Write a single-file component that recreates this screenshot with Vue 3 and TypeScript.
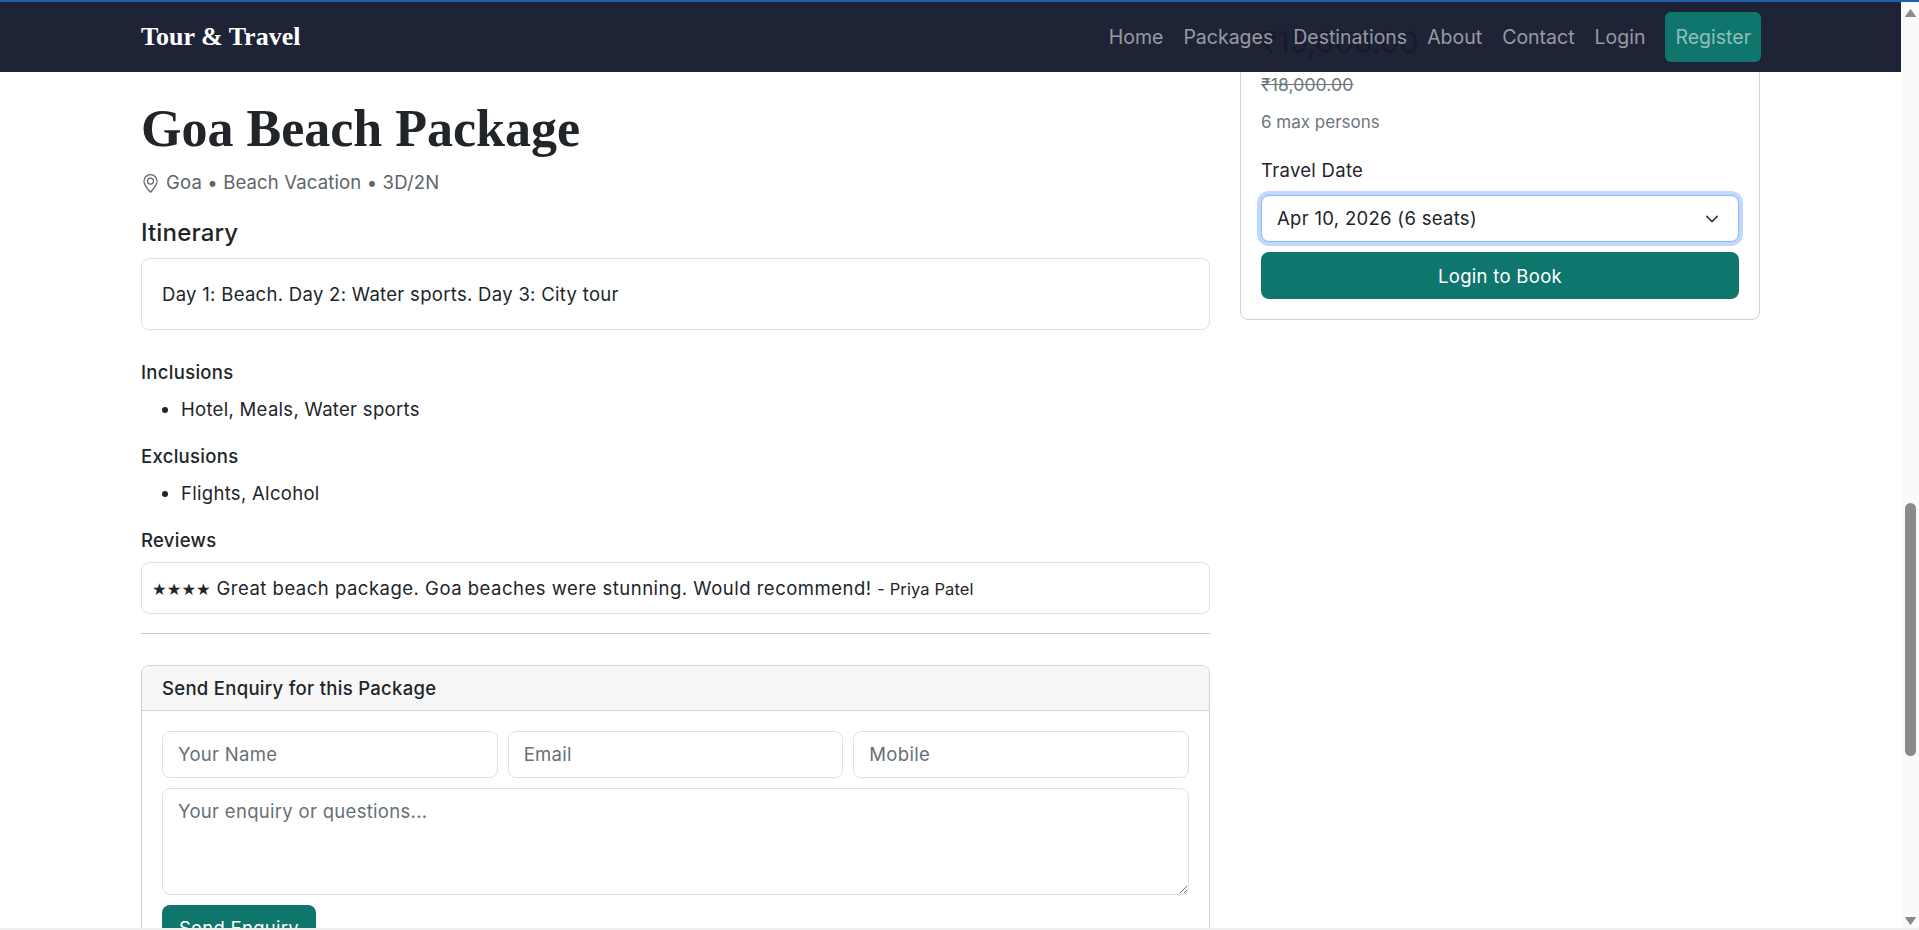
<script setup lang="ts">
const links: string[] = ['Home', 'Packages', 'Destinations', 'About', 'Contact', 'Login']
</script>

<template>
  <div class="window">
    <div class="topline"></div>
    <div class="viewport">
      <div class="page">
        <nav class="navbar">
          <a class="brand">Tour &amp; Travel</a>
          <div class="navlinks">
            <a v-for="l in links" :key="l" class="navlink">{{ l }}</a>
            <a class="navcta">Register</a>
          </div>
        </nav>
        <main class="row">
          <section class="left">
            <h1 class="title">Goa Beach Package</h1>
            <p class="location">
              <svg class="pin" viewBox="0 0 16 16" fill="currentColor" aria-hidden="true">
                <path d="M12.166 8.94c-.524 1.062-1.234 2.12-1.96 3.07A32 32 0 0 1 8 14.58a32 32 0 0 1-2.206-2.57c-.726-.95-1.436-2.008-1.96-3.07C3.304 7.867 3 6.862 3 6a5 5 0 0 1 10 0c0 .862-.305 1.867-.834 2.94M8 16s6-5.686 6-10A6 6 0 0 0 2 6c0 4.314 6 10 6 10" />
                <path d="M8 8a2 2 0 1 1 0-4 2 2 0 0 1 0 4m0 1a3 3 0 1 0 0-6 3 3 0 0 0 0 6" />
              </svg>
              <span>Goa • Beach Vacation • 3D/2N</span>
            </p>
            <h2 class="h-itin">Itinerary</h2>
            <div class="box itin">Day 1: Beach. Day 2: Water sports. Day 3: City tour</div>
            <h3 class="h-sub first">Inclusions</h3>
            <ul class="list"><li>Hotel, Meals, Water sports</li></ul>
            <h3 class="h-sub">Exclusions</h3>
            <ul class="list"><li>Flights, Alcohol</li></ul>
            <h3 class="h-sub">Reviews</h3>
            <div class="box review">
              <div><span class="stars">★★★★</span> Great beach package. Goa beaches were stunning. Would recommend! <small class="author">- Priya Patel</small></div>
            </div>
            <hr class="rule" />
            <div class="enquiry">
              <div class="enquiry-head">Send Enquiry for this Package</div>
              <form class="enquiry-body" @submit.prevent>
                <div class="fields">
                  <input class="control" placeholder="Your Name" />
                  <input class="control" placeholder="Email" />
                  <input class="control" placeholder="Mobile" />
                </div>
                <textarea class="control area" placeholder="Your enquiry or questions..."></textarea>
                <button class="btn send" type="button">Send Enquiry</button>
              </form>
            </div>
          </section>
          <aside class="right">
            <div class="price-card">
              <div class="price">₹15,000.00</div>
              <div class="old-price">₹18,000.00</div>
              <div class="persons">6 max persons</div>
              <label class="date-label">Travel Date</label>
              <div class="select-wrap">
                <select class="select">
                  <option>Apr 10, 2026 (6 seats)</option>
                </select>
                <svg class="chevron" viewBox="0 0 16 16" fill="none" stroke="#343a40" stroke-width="1.8" stroke-linecap="round" stroke-linejoin="round" aria-hidden="true">
                  <path d="m2 5 6 6 6-6" />
                </svg>
              </div>
              <button class="btn book" type="button">Login to Book</button>
            </div>
          </aside>
        </main>
      </div>
      <div class="scrollbar">
        <svg class="arrow" viewBox="0 0 12 10"><path d="M6 1.5 11 8.5H1z" fill="#8a8a8a" stroke="#8a8a8a" stroke-linejoin="round" /></svg>
        <div class="track"><div class="thumb"></div></div>
        <svg class="arrow" viewBox="0 0 12 10"><path d="M1 1.5H11L6 8.5z" fill="#8a8a8a" stroke="#8a8a8a" stroke-linejoin="round" /></svg>
      </div>
    </div>
    <div class="bottomline"></div>
  </div>
</template>

<style>
html, body { margin: 0; padding: 0; overflow: hidden; background: #fff; }
</style>

<style scoped>
.window {
  width: 1919px;
  height: 930px;
  display: flex;
  flex-direction: column;
  overflow: hidden;
  font-family: Inter, "Noto Sans", sans-serif;
  font-size: 18.5px;
  line-height: 1.4;
  color: #212529;
  letter-spacing: 0.3px;
}
.topline { height: 2px; background: #1f5fae; flex: none; }
.bottomline { height: 2px; background: #eeeeee; flex: none; }
.viewport { flex: 1; min-height: 0; display: flex; }
.page { position: relative; flex: 1; min-width: 0; overflow: hidden; background: #fff; }

.navbar {
  position: absolute;
  top: 0;
  left: 0;
  right: 0;
  height: 70px;
  z-index: 5;
  box-sizing: border-box;
  padding: 1px 140px 0 141px;
  display: flex;
  align-items: center;
  justify-content: space-between;
  background: rgba(23, 29, 48, 0.97);
}
.brand {
  font-family: "Liberation Serif", serif;
  font-weight: 700;
  font-size: 26px;
  letter-spacing: 0;
  color: #fff;
}
.navlinks { display: flex; align-items: center; gap: 20px; font-size: 19.5px; letter-spacing: 0; margin-top: -1px; }
.navlink { color: rgba(255, 255, 255, 0.55); padding-top: 2px; }
.navcta {
  color: rgba(255, 255, 255, 0.55);
  background: #0f766e;
  border-radius: 6px;
  padding: 2px 10px 0;
  height: 50px;
  box-sizing: border-box;
  display: flex;
  align-items: center;
}

.row { display: flex; gap: 30px; padding: 2px 141px 0; align-items: flex-start; }
.left { flex: 0 0 1069px; min-width: 0; padding-top: 95px; }
.right { flex: 0 0 520px; }

.title {
  margin: 0;
  font-family: "Liberation Serif", serif;
  font-weight: 700;
  font-size: 52px;
  line-height: 60px;
  letter-spacing: 0;
}
.location {
  margin: 11px 0 0;
  height: 26px;
  display: flex;
  align-items: center;
  gap: 6px;
  color: #5d646b;
  letter-spacing: 0.15px;
}
.pin { width: 19px; height: 19px; flex: none; }
.h-itin { margin: 22px 0 0; font-size: 24px; line-height: 30px; font-weight: 450; letter-spacing: 0.15px; }
.box {
  box-sizing: border-box;
  border: 1px solid #dfe1e6;
  border-radius: 8px;
  margin-top: 10px;
}
.itin { height: 72px; padding: 2px 20px 0; display: flex; align-items: center; }
.h-sub { margin: 21px 0 0; font-size: 18.5px; line-height: 26px; font-weight: 450; }
.h-sub.first { margin-top: 29px; }
.list { margin: 11px 0 0; padding-left: 40px; line-height: 26px; }
.review { margin-top: 9px; height: 52px; padding: 1px 10px 0; display: flex; align-items: center; letter-spacing: 0.5px; }
.stars { font-family: "DejaVu Sans", sans-serif; font-size: 16.4px; letter-spacing: 0; }
.author { font-size: 16.5px; letter-spacing: 0.1px; }
.rule { margin: 19px 0 0; border: 0; border-top: 1px solid #c9c9c9; }
.enquiry { margin-top: 31px; border: 1px solid #d2d2d2; border-radius: 8px; overflow: hidden; }
.enquiry-head {
  height: 45px;
  box-sizing: border-box;
  padding: 1px 20px 0;
  display: flex;
  align-items: center;
  background: #f7f7f7;
  border-bottom: 1px solid #d2d2d2;
  font-weight: 450;
}
.enquiry-body { padding: 20px; display: flex; flex-direction: column; gap: 10px; align-items: flex-start; }
.fields { display: flex; gap: 10px; width: 100%; }
.control {
  box-sizing: border-box;
  flex: 1;
  min-width: 0;
  height: 47px;
  padding: 0 15px 2px;
  border: 1px solid #dfe1e6;
  border-radius: 8px;
  font: inherit;
  letter-spacing: inherit;
  color: #212529;
  background: #fff;
  outline: none;
}
.control::placeholder { color: #667078; opacity: 1; }
.area { flex: none; width: 100%; height: 107px; padding: 10px 15px; display: block; }
.btn {
  border: 0;
  border-radius: 8px;
  background: #0f766e;
  color: #fff;
  font: inherit;
  letter-spacing: inherit;
  cursor: pointer;
}
.send { width: 154px; height: 47px; flex: none; }

.price-card {
  box-sizing: border-box;
  height: 316px;
  padding: 0 20px;
  border: 1px solid #d2d2d2;
  border-radius: 8px;
  display: flex;
  flex-direction: column;
}
.price { font-size: 30px; line-height: 40px; font-weight: 500; margin-top: 17px; white-space: nowrap; letter-spacing: -0.2px; color: #171b2a; }
.old-price { margin-top: 10px; line-height: 26px; font-size: 17.6px; letter-spacing: 0.1px; color: #6c757d; text-decoration: line-through; }
.persons { margin-top: 11px; line-height: 26px; font-size: 17px; letter-spacing: 0; color: #6c757d; }
.date-label { margin-top: 22px; line-height: 26px; }
.select-wrap { position: relative; margin-top: 12px; }
.select {
  appearance: none;
  box-sizing: border-box;
  width: 100%;
  height: 47px;
  padding: 0 15px;
  border: 1px solid #86b7fe;
  border-radius: 8px;
  box-shadow: 0 0 0 4px #c0d9fc;
  font: inherit;
  letter-spacing: inherit;
  color: #212529;
  background: #fff;
  outline: none;
}
.chevron { position: absolute; top: 17px; right: 20px; width: 14px; height: 14px; pointer-events: none; }
.book { height: 47px; margin-top: 10px; width: 100%; padding: 2px 0 0; }

.scrollbar { flex: 0 0 18px; background: #fafafa; display: flex; flex-direction: column; align-items: center; }
.arrow { width: 13px; height: 10px; flex: none; margin: 6px 0 2px; }
.track { flex: 1; width: 100%; position: relative; }
.thumb { position: absolute; left: 4px; right: 3px; top: 483px; height: 253px; background: #8a8a8a; border-radius: 6px; }
</style>
